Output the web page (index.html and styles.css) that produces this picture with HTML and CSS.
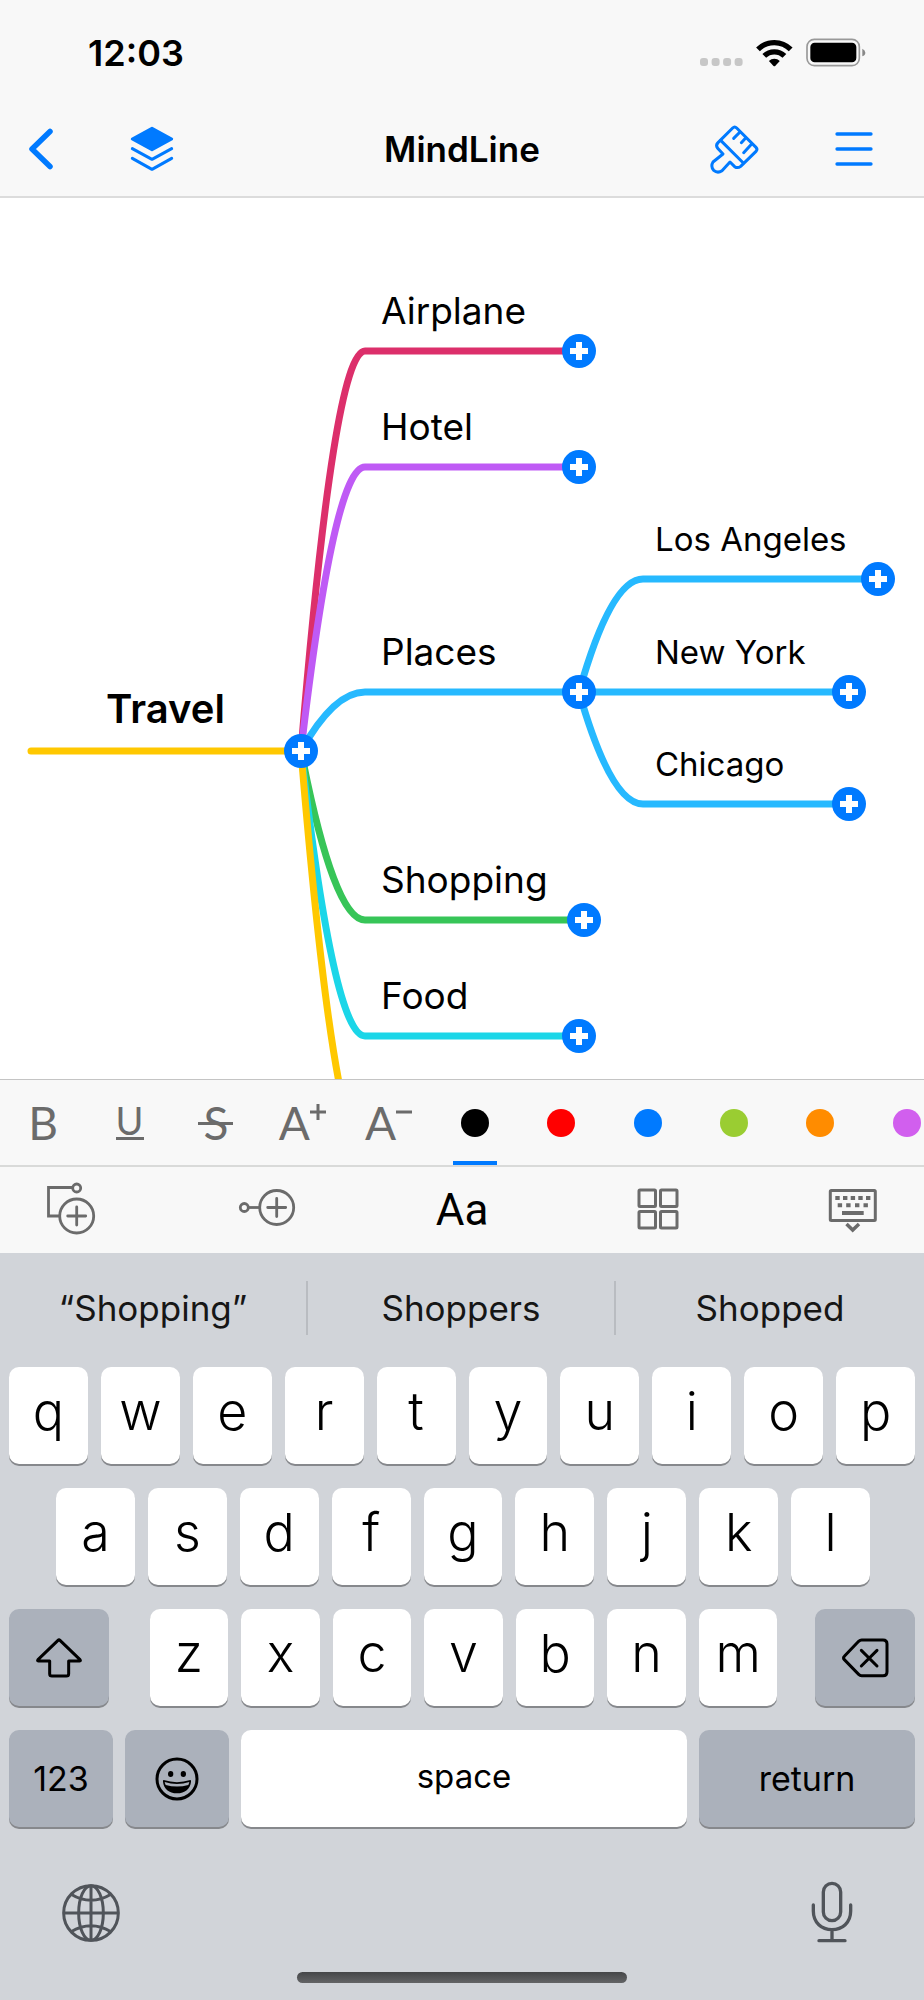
FILE: index.html
```html
<!DOCTYPE html>
<html lang="en">
<head>
  <meta charset="UTF-8" />
  <meta name="viewport" content="width=device-width, initial-scale=1.0" />
  <title>MindLine</title>
  <link rel="stylesheet" href="styles.css">
</head>
<body>
  <header>
    <div class="status">
      <span class="time">12:03</span>
      <div class="status-icons">
        <svg width="43" height="28" viewBox="0 0 43 28" fill="#c7c7c7">
          <rect x="0" y="19" width="8" height="8" rx="3"/>
          <rect x="11.6" y="19" width="8" height="8" rx="3"/>
          <rect x="23.1" y="19" width="8" height="8" rx="3"/>
          <rect x="34.6" y="19" width="8" height="8" rx="3"/>
        </svg>
        <svg width="37" height="28" viewBox="880 115 112 84" fill="none" stroke="#000" stroke-width="16">
          <path d="M886 146A70 70 0 0 1 985 146"/>
          <path d="M905 166A43 43 0 0 1 966 166"/>
          <path d="M919 181A24 24 0 0 1 952 181L938 196Q935.500 198 933 196Z" fill="#000" stroke="none"/>
        </svg>
        <svg width="60" height="29" viewBox="1031 113 180 87">
          <rect x="1034" y="117" width="157" height="79" rx="22" fill="none" stroke="#999" stroke-width="5"/>
          <rect x="1044" y="127" width="138" height="59" rx="13"/>
          <path d="M1200 145Q1209 149 1209 157T1200 168Z" fill="#888"/>
        </svg>
      </div>
    </div>
    <nav>
      <div class="nav-left">
        <button type="button" aria-label="Back">
          <svg width="32" height="46" viewBox="0 0 32 46" fill="none" stroke="#007aff" stroke-width="5.500" stroke-linecap="round" stroke-linejoin="round"><path d="M26 5.500L8 23L26 40.500"/></svg>
        </button>
        <button type="button" aria-label="Layers">
          <svg width="46" height="46" viewBox="388 378 138 138" fill="none" stroke="#007aff" stroke-width="9" stroke-linecap="round" stroke-linejoin="round">
            <path d="M457 385L516 417L457 449L398 417Z" fill="#007aff"/>
            <path d="M398 446L457 478L516 446"/>
            <path d="M398 475L457 508L516 475"/>
          </svg>
        </button>
      </div>
      <h1>MindLine</h1>
      <div class="nav-right">
        <button type="button" aria-label="Style">
          <svg width="53" height="53" viewBox="740 367 159 159" fill="none" stroke="#007aff" stroke-width="9" stroke-linecap="round" stroke-linejoin="round">
            <path d="M814 382Q820 376 826 382L884 440Q890 446 884 452L838 497Q829 504 820 498L806 484L782 510Q769 519 757 509Q747 497 755 484L785 460L769 443Q762 434 770 426Z"/>
            <path d="M778 419L846 487M836 394L817 413M853 412L840 426M871 430L847 456"/>
          </svg>
        </button>
        <button type="button" aria-label="Menu">
          <svg width="40" height="40" viewBox="0 0 40 40" stroke="#007aff" stroke-width="3.300" stroke-linecap="round"><path d="M3 5H37M3 20H37M3 35H37"/></svg>
        </button>
      </div>
    </nav>
  </header>

  <main class="map">
    <svg class="branches" width="924" height="1100" viewBox="0 0 924 1100" fill="none" stroke-width="7" stroke-linecap="round">
      <path stroke="#dc2f6b" d="M301 553Q334 153 365 153H579"/>
      <path stroke="#bf5af5" d="M301 553Q334 269 365 269H579"/>
      <path stroke="#26b9ff" d="M301 553Q334 494 365 494H849"/>
      <path stroke="#26b9ff" d="M579 494Q611 381 643 381H877"/>
      <path stroke="#26b9ff" d="M579 494Q611 606 643 606H849"/>
      <path stroke="#37c558" d="M301 553Q334 722 365 722H584"/>
      <path stroke="#1bd6e8" d="M301 553Q334 838 365 838H579"/>
      <path stroke="#ffc800" d="M31 553H301Q334 953 365 953"/>
    </svg>
    <div class="node root travel"><span>Travel</span><button type="button" aria-label="Add to Travel"></button></div>
    <div class="node airplane"><span>Airplane</span><button type="button" aria-label="Add to Airplane"></button></div>
    <div class="node hotel"><span>Hotel</span><button type="button" aria-label="Add to Hotel"></button></div>
    <div class="node places"><span>Places</span><button type="button" aria-label="Add to Places"></button></div>
    <div class="node leaf los-angeles"><span>Los Angeles</span><button type="button" aria-label="Add to Los Angeles"></button></div>
    <div class="node leaf new-york"><span>New York</span><button type="button" aria-label="Add to New York"></button></div>
    <div class="node leaf chicago"><span>Chicago</span><button type="button" aria-label="Add to Chicago"></button></div>
    <div class="node shopping"><span>Shopping</span><button type="button" aria-label="Add to Shopping"></button></div>
    <div class="node food"><span>Food</span><button type="button" aria-label="Add to Food"></button></div>
  </main>

  <div class="format-bar">
    <div class="format-items">
      <button type="button" aria-label="Bold">B</button>
      <button type="button" aria-label="Underline"><span class="underline">U</span></button>
      <button type="button" aria-label="Strikethrough"><span class="strike">S</span></button>
      <button type="button" aria-label="Larger text">A<svg width="16" height="34" viewBox="0 0 16 34" stroke="#6b6b6b" stroke-width="3"><path d="M0 6H16M8 -2V14"/></svg></button>
      <button type="button" aria-label="Smaller text">A<svg width="16" height="34" viewBox="0 0 16 34" stroke="#6b6b6b" stroke-width="3"><path d="M0 6H16"/></svg></button>
      <button type="button" class="selected" aria-label="Black"><i class="dot black"></i></button>
      <button type="button" aria-label="Red"><i class="dot red"></i></button>
      <button type="button" aria-label="Blue"><i class="dot blue"></i></button>
      <button type="button" aria-label="Green"><i class="dot green"></i></button>
      <button type="button" aria-label="Orange"><i class="dot orange"></i></button>
      <button type="button" aria-label="Purple"><i class="dot purple"></i></button>
    </div>
  </div>

  <div class="tool-bar">
    <button type="button" aria-label="Add sibling">
      <svg width="60" height="60" viewBox="0 0 60 60" fill="none" stroke="#6b6b6b" stroke-width="2.800">
        <circle cx="34.700" cy="8" r="4"/>
        <path d="M30.500 7.500H6.500V36H17.500"/>
        <circle cx="34.700" cy="36" r="17"/>
        <path d="M34.700 27V45M25.700 36H43.700" stroke-linecap="round"/>
      </svg>
    </button>
    <button type="button" aria-label="Add child">
      <svg width="60" height="60" viewBox="0 0 60 60" fill="none" stroke="#6b6b6b" stroke-width="2.800">
        <circle cx="7.300" cy="27.500" r="4"/>
        <path d="M11.500 27.500H22.500"/>
        <circle cx="39.700" cy="27.500" r="17"/>
        <path d="M39.700 18.500V36.500M30.700 27.500H48.700" stroke-linecap="round"/>
      </svg>
    </button>
    <button type="button" class="text-tool">Aa</button>
    <button type="button" aria-label="Grid">
      <svg width="60" height="60" viewBox="0 0 60 60" fill="none" stroke="#6b6b6b" stroke-width="3">
        <rect x="12" y="10" width="16.500" height="16.500" rx="1"/>
        <rect x="33.500" y="10" width="16.500" height="16.500" rx="1"/>
        <rect x="12" y="31.500" width="16.500" height="16.500" rx="1"/>
        <rect x="33.500" y="31.500" width="16.500" height="16.500" rx="1"/>
      </svg>
    </button>
    <button type="button" aria-label="Hide keyboard">
      <svg width="60" height="60" viewBox="0 0 60 60" fill="#6b6b6b">
        <rect x="8.300" y="10.500" width="45" height="30" rx="1" fill="none" stroke="#6b6b6b" stroke-width="3"/>
        <path d="M13.300 16h4.400v4h-4.400zM21 16h4.400v4h-4.400zM28.700 16h4.400v4h-4.400zM36.300 16h4.400v4h-4.400zM44 16h4.400v4h-4.400z"/>
        <path d="M15.700 23.300h4.400v4h-4.400zM24.200 23.300h4.400v4h-4.400zM33 23.300h4.400v4h-4.400zM41.500 23.300h4.400v4h-4.400z"/>
        <path d="M20 31h21.700v4h-21.700z"/>
        <path d="M24.500 44L30.700 50L37 44" fill="none" stroke="#6b6b6b" stroke-width="3.500"/>
      </svg>
    </button>
  </div>

  <section class="keyboard">
    <div class="suggestions">
      <button type="button">“Shopping”</button>
      <button type="button">Shoppers</button>
      <button type="button">Shopped</button>
    </div>
    <div class="keys">
      <div class="row">
        <button type="button">q</button>
        <button type="button">w</button>
        <button type="button">e</button>
        <button type="button">r</button>
        <button type="button">t</button>
        <button type="button">y</button>
        <button type="button">u</button>
        <button type="button">i</button>
        <button type="button">o</button>
        <button type="button">p</button>
      </div>
      <div class="row home">
        <button type="button">a</button>
        <button type="button">s</button>
        <button type="button">d</button>
        <button type="button">f</button>
        <button type="button">g</button>
        <button type="button">h</button>
        <button type="button">j</button>
        <button type="button">k</button>
        <button type="button">l</button>
      </div>
      <div class="row bottom">
        <button type="button" class="special edge" aria-label="Shift">
          <svg width="50" height="44" viewBox="99 140 150 132" fill="none" stroke="#000" stroke-width="9" stroke-linejoin="round"><path d="M171 153Q174 150 177 153L237 211Q240 215 236 215H203V253Q203 260 196 260H153Q146 260 146 253V215H112Q108 215 111 211Z"/></svg>
        </button>
        <div class="row letters">
          <button type="button">z</button>
          <button type="button">x</button>
          <button type="button">c</button>
          <button type="button">v</button>
          <button type="button">b</button>
          <button type="button">n</button>
          <button type="button">m</button>
        </div>
        <button type="button" class="special edge" aria-label="Delete">
          <svg width="50" height="44" viewBox="1134 140 150 132" fill="none" stroke="#000" stroke-width="9" stroke-linecap="round" stroke-linejoin="round"><path d="M1199 152H1263Q1275 152 1275 164V247Q1275 259 1263 259H1199Q1194 259 1190 255L1147 211Q1142 206 1147 201L1190 156Q1194 152 1199 152Z"/><path d="M1198 183L1245 230M1245 183L1198 230"/></svg>
        </button>
      </div>
      <div class="row actions">
        <button type="button" class="special">123</button>
        <button type="button" class="special" aria-label="Emoji">
          <svg width="44" height="44" viewBox="465 501 132 132">
            <circle cx="531" cy="567" r="60" fill="none" stroke="#000" stroke-width="9"/>
            <ellipse cx="512" cy="552" rx="8" ry="9"/>
            <ellipse cx="550" cy="552" rx="8" ry="9"/>
            <path d="M491 570Q531 583 571 570Q574 570 573 575C571 596 555 610 531 610S491 596 489 575Q488 570 491 570Z"/>
            <path d="M494 576Q531 588 568 576Q567 581 565 585Q531 594 497 585Q495 581 494 576Z" fill="#abb1bb"/>
          </svg>
        </button>
        <button type="button" class="space">space</button>
        <button type="button" class="special return">return</button>
      </div>
    </div>
    <div class="system-keys">
      <button type="button" aria-label="Next keyboard">
        <svg width="58" height="58" viewBox="187 883 174 174" fill="none" stroke="#50545a" stroke-width="9">
          <circle cx="274" cy="970" r="82"/>
          <ellipse cx="274" cy="970" rx="37" ry="82"/>
          <path d="M274 888V1052M192 970H356M214 914Q274 950 334 914M214 1026Q274 990 334 1026"/>
        </svg>
      </button>
      <button type="button" aria-label="Dictate">
        <svg width="44" height="62" viewBox="1045 871 132 186" fill="none" stroke="#50545a" stroke-width="10" stroke-linecap="round">
          <rect x="1085" y="875" width="52" height="112" rx="26"/>
          <path d="M1055 940V958C1055 993 1080 1014 1111 1014S1167 993 1167 958V940M1111 1014V1047M1072 1047H1150"/>
        </svg>
      </button>
    </div>
    <div class="home-indicator"></div>
  </section>
</body>
</html>
```
FILE: styles.css
```css
:root {
  --blue: #007aff;
  --bar: #f8f8f8;
  --icon: #6b6b6b;
  --keyboard: #d1d4d9;
  --special: #abb1bb;
}
* {
  box-sizing: border-box;
}
body {
  margin: 0;
  min-height: 100vh;
  display: flex;
  flex-direction: column;
  font-family: Inter, "Liberation Sans", sans-serif;
  color: #000;
  background: #fff;
}
button {
  margin: 0;
  padding: 0;
  border: none;
  background: none;
  font: inherit;
  color: inherit;
  cursor: pointer;
}
svg {
  display: block;
  overflow: visible;
}

/* Header */
header {
  background: var(--bar);
  border-bottom: 2px solid #dcdcdc;
}
.status {
  display: flex;
  justify-content: space-between;
  align-items: center;
  height: 102px;
  padding: 3px 58px 0 88px;
}
.time {
  font-size: 36px;
  font-weight: 600;
}
.status-icons {
  display: flex;
  align-items: center;
  gap: 13px;
}
nav {
  display: grid;
  grid-template-columns: 1fr auto 1fr;
  align-items: center;
  height: 94px;
  padding: 0 24px;
}
.nav-left, .nav-right {
  display: flex;
  align-items: center;
  gap: 73px;
}
.nav-right {
  justify-content: flex-end;
  padding-right: 26px;
}
h1 {
  margin: 0;
  font-size: 35px;
  font-weight: 600;
}

/* Mind map */
.map {
  position: relative;
  flex: 1;
  min-height: 800px;
  overflow: hidden;
}
.branches {
  position: absolute;
  top: 0;
  left: 0;
}
.node {
  position: absolute;
  width: 198px;
  height: 64px;
  font-size: 37px;
  line-height: 48px;
  white-space: nowrap;
}
.node button {
  position: absolute;
  right: -17px;
  bottom: -17px;
  width: 34px;
  height: 34px;
  border-radius: 50%;
  background:
    linear-gradient(#fff, #fff) center / 18px 6px no-repeat,
    linear-gradient(#fff, #fff) center / 6px 18px no-repeat,
    var(--blue);
}
.root {
  font-size: 40px;
  font-weight: 600;
  text-align: center;
}
.leaf {
  font-size: 33px;
}
.travel {
  left: 30px;
  top: 487px;
  width: 271px;
  height: 66px;
}
.airplane {
  left: 381px;
  top: 89px;
}
.hotel {
  left: 381px;
  top: 205px;
}
.places {
  left: 381px;
  top: 430px;
}
.shopping {
  left: 381px;
  top: 658px;
  width: 203px;
}
.food {
  left: 381px;
  top: 774px;
}
.los-angeles {
  left: 655px;
  top: 317px;
  width: 223px;
}
.new-york {
  left: 655px;
  top: 430px;
  width: 194px;
}
.chicago {
  left: 655px;
  top: 542px;
  width: 194px;
}

/* Formatting strip, the last swatch runs off the edge */
.format-bar {
  overflow: hidden;
  background: var(--bar);
  border-top: 1px solid #c4c4c4;
  border-bottom: 2px solid #d9dad9;
}
.format-items {
  display: grid;
  grid-template-columns: repeat(11, 1fr);
  width: calc(100% + 26px);
  height: 85px;
  font-family: Lato, "Liberation Sans", sans-serif;
  font-size: 46px;
  line-height: 46px;
  color: var(--icon);
}
.format-items button {
  position: relative;
  display: flex;
  align-items: center;
  justify-content: center;
}
.underline {
  width: 28px;
  height: 34px;
  border-bottom: 3px solid var(--icon);
  font-size: 38px;
  line-height: 28px;
}
.strike {
  position: relative;
}
.strike::after {
  content: "";
  position: absolute;
  left: -5px;
  right: -5px;
  top: 22px;
  height: 3px;
  background: var(--icon);
}
.dot {
  width: 28px;
  height: 28px;
  border-radius: 50%;
}
.black { background: #000; }
.red { background: #f00; }
.blue { background: var(--blue); }
.green { background: #9acd32; }
.orange { background: #ff8c00; }
.purple { background: #d15fee; }
.selected::after {
  content: "";
  position: absolute;
  left: 50%;
  bottom: 0;
  width: 44px;
  height: 4px;
  margin-left: -22px;
  background: var(--blue);
}

/* Tools */
.tool-bar {
  display: flex;
  justify-content: space-between;
  align-items: center;
  height: 86px;
  padding: 0 24px;
  background: var(--bar);
}
.tool-bar button {
  display: flex;
  align-items: center;
  justify-content: center;
  width: 96px;
  height: 60px;
}
.tool-bar .text-tool {
  font-family: Roboto, "Liberation Sans", sans-serif;
  font-size: 44px;
}

/* Keyboard */
.keyboard {
  background: var(--keyboard);
  padding-bottom: 17px;
}
.suggestions {
  display: grid;
  grid-template-columns: 1fr 1fr 1fr;
  padding: 28px 0 32px;
}
.suggestions button {
  height: 54px;
  border-right: 2px solid #b9bcc1;
  font-size: 35px;
  color: #161616;
}
.suggestions button:last-child {
  border-right: none;
}
.keys {
  display: flex;
  flex-direction: column;
  gap: 24px;
  padding: 0 9px;
}
.row {
  display: flex;
  gap: 13px;
}
.row button {
  flex: 1 1 0;
  display: flex;
  align-items: center;
  justify-content: center;
  min-width: 0;
  height: 97px;
  padding-bottom: 8px;
  border-radius: 10px;
  background: #fff;
  box-shadow: 0 2px 0 #86888c;
  font-size: 52px;
  font-weight: 300;
}
.home {
  padding: 0 45px 0 47px;
}
.bottom {
  gap: 0;
}
.letters {
  flex: 1;
  margin: 0 38px 0 41px;
}
.row .special {
  padding-bottom: 0;
  background: var(--special);
  font-size: 34px;
  font-weight: 400;
}
.row .edge {
  flex: 0 0 11%;
}
.actions {
  gap: 12px;
}
.actions .special {
  flex-grow: 104;
}
.actions .space {
  flex-grow: 446;
  padding-bottom: 6px;
  font-size: 33px;
  font-weight: 400;
}
.actions .return {
  flex-grow: 216;
}
.system-keys {
  display: flex;
  justify-content: space-between;
  align-items: center;
  height: 68px;
  margin-top: 52px;
  padding: 0 70px 0 62px;
}
.home-indicator {
  width: 330px;
  max-width: 60%;
  height: 11px;
  margin: 25px auto 0;
  border-radius: 6px;
  background: linear-gradient(#454648, #636466);
}
```
